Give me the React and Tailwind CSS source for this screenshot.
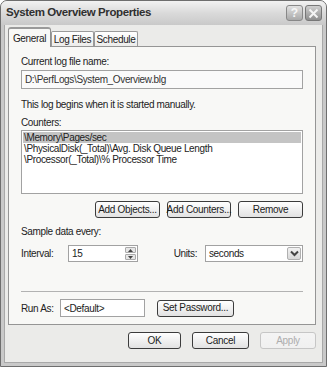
import React from "react";

const font = { fontFamily: '"Liberation Sans", Arial, sans-serif' };

const Btn = ({ children, className = "", disabled = false }) => (
  <button
    className={`h-[17px] rounded-[3px] border text-[10px] tracking-[-0.3px] leading-none whitespace-nowrap flex items-center justify-center bg-gradient-to-b ${
      disabled ? "border-[#c6c6c6] text-[#adadad] from-[#f4f4f4] to-[#f0f0f0]" : "border-[#3c3c3c] text-[#1c1c1c] from-white to-[#e2e2e2]"
    } ${className}`}
  >
    {children}
  </button>
);

const Chevron = () => (
  <svg width="9" height="7" viewBox="0 0 9 7">
    <path d="M1 1.5 L4.5 5 L8 1.5" fill="none" stroke="#444" strokeWidth="2" />
  </svg>
);

export default function App() {
  return (
    <div style={font} className="w-[327px] h-[367px] bg-white whitespace-nowrap">
      <div className="w-[327px] h-[367px] flex flex-col rounded-t-[7px] border border-[#6e6e6e] bg-[#c9c9c9] overflow-hidden">
        {/* Title bar */}
        <div className="h-[24px] shrink-0 flex items-center justify-between pl-[5px] pr-[4px] bg-gradient-to-b from-[#f2f2f2] via-[#dadada] to-[#c9c9c9]">
          <span className="text-[11.5px] font-bold tracking-[-0.4px] text-[#303030]">System Overview Properties</span>
          <div className="flex gap-[2px]">
            <div className="w-[17px] h-[16px] rounded-[3px] border border-[#888] bg-gradient-to-b from-[#e2e2e2] to-[#a9a9a9] flex items-center justify-center text-[12px] font-bold text-[#f6f6f6] leading-none">
              ?
            </div>
            <div className="w-[17px] h-[16px] rounded-[3px] border border-[#777] bg-gradient-to-b from-[#cfcfcf] to-[#8e8e8e] flex items-center justify-center">
              <svg width="11" height="11" viewBox="0 0 11 11">
                <path d="M1.5 1.5 L9.5 9.5 M9.5 1.5 L1.5 9.5" stroke="#f4f4f4" strokeWidth="2" />
              </svg>
            </div>
          </div>
        </div>

        {/* Body */}
        <div className="flex-1 mx-[3px] mb-[3px] bg-[#ebebe9] pl-[3px] pr-[6px] pt-[2px] flex flex-col text-[10px] tracking-[-0.35px] text-[#222] border-x border-b border-[#a8a8a8]">
          {/* Tabs */}
          <div className="flex items-end h-[19px] relative z-10">
            <div className="w-[43px] h-[20px] -mb-[1px] border border-b-0 border-[#8f8f8f] rounded-t-[3px] bg-[#f8f8f6] flex items-center justify-center border-t-2 border-t-[#9a9a9a]">
              General
            </div>
            <div className="w-[43px] h-[15px] border border-b-0 border-[#9a9a9a] rounded-t-[2px] bg-gradient-to-b from-white to-[#ececea] flex items-center justify-center">
              Log Files
            </div>
            <div className="w-[44px] h-[15px] border border-b-0 border-[#9a9a9a] rounded-t-[2px] bg-gradient-to-b from-white to-[#ececea] flex items-center justify-center">
              Schedule
            </div>
          </div>

          {/* Panel */}
          <div className="h-[279px] border border-[#959595] bg-[#f8f8f6] px-[12px] flex flex-col">
            <div className="mt-[8px] leading-[13px]">Current log file name:</div>
            <div className="mt-[2px] h-[19px] border border-[#a2a2a2] bg-[#fafafa] flex items-center px-[3px] text-[#333]">
              D:\PerfLogs\System_Overview.blg
            </div>
            <div className="mt-[9px] leading-[13px]">This log begins when it is started manually.</div>
            <div className="mt-[5px] leading-[13px]">Counters:</div>
            <div className="mt-[1px] h-[64px] border border-[#a2a2a2] bg-white p-[1px] leading-[11px]">
              <div className="bg-[#c4c4c4] px-[1px] h-[11px]">\Memory\Pages/sec</div>
              <div className="px-[1px]">\PhysicalDisk(_Total)\Avg. Disk Queue Length</div>
              <div className="px-[1px]">\Processor(_Total)\% Processor Time</div>
            </div>
            <div className="mt-[7px] flex justify-end gap-[7px]">
              <Btn className="w-[65px]">Add Objects...</Btn>
              <Btn className="w-[64px]">Add Counters...</Btn>
              <Btn className="w-[65px]">Remove</Btn>
            </div>
            <div className="mt-[7px] leading-[13px]">Sample data every:</div>
            <div className="mt-[7px] h-[17px] flex items-center">
              <span className="w-[48px]">Interval:</span>
              <div className="w-[71px] h-[17px] border border-[#a2a2a2] bg-white flex items-center justify-between pl-[3px] pr-[1px]">
                <span>15</span>
                <div className="flex flex-col gap-[1px]">
                  <div className="w-[11px] h-[6px] rounded-[1px] border border-[#aaa] bg-[#e6e6e6] flex items-center justify-center">
                    <svg width="5" height="3" viewBox="0 0 5 3"><path d="M0 3 L2.5 0 L5 3 Z" fill="#444" /></svg>
                  </div>
                  <div className="w-[11px] h-[6px] rounded-[1px] border border-[#aaa] bg-[#e6e6e6] flex items-center justify-center">
                    <svg width="5" height="3" viewBox="0 0 5 3"><path d="M0 0 L2.5 3 L5 0 Z" fill="#444" /></svg>
                  </div>
                </div>
              </div>
              <span className="ml-[36px] w-[32px]">Units:</span>
              <div className="w-[100px] h-[17px] border border-[#a2a2a2] bg-white flex items-center justify-between pl-[3px] pr-[1px]">
                <span>seconds</span>
                <div className="w-[14px] h-[13px] rounded-[2px] border border-[#b0b0b0] bg-gradient-to-b from-[#f2f2f2] to-[#d8d8d8] flex items-center justify-center">
                  <Chevron />
                </div>
              </div>
            </div>
            <div className="mt-[29px] h-[1px] bg-[#b2b2b2]" />
            <div className="mt-[7px] h-[18px] flex items-center">
              <span className="w-[39px]">Run As:</span>
              <div className="w-[85px] h-[18px] border border-[#a2a2a2] bg-white flex items-center px-[3px]">
                &lt;Default&gt;
              </div>
              <Btn className="ml-[12px] w-[77px]">Set Password...</Btn>
            </div>
          </div>

          {/* Bottom buttons */}
          <div className="mt-[7px] flex justify-end gap-[11px]">
            <Btn className="w-[53px]">OK</Btn>
            <Btn className="w-[57px]">Cancel</Btn>
            <Btn className="w-[56px]" disabled>Apply</Btn>
          </div>
        </div>
      </div>
    </div>
  );
}
